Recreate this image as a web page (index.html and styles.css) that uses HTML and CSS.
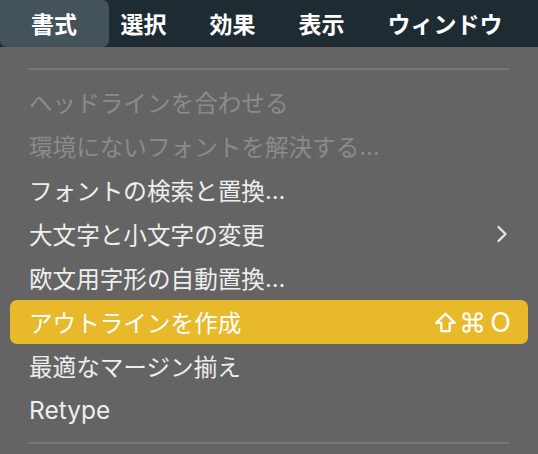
FILE: index.html
```html
<!DOCTYPE html>
<html lang="ja">
<head>
<meta charset="utf-8">
<title>書式メニュー</title>
<link rel="stylesheet" href="styles.css">
</head>
<body>
<div class="screen">
  <nav class="menubar">
    <span class="bar-item active">書式</span>
    <span class="bar-item">選択</span>
    <span class="bar-item">効果</span>
    <span class="bar-item">表示</span>
    <span class="bar-item">ウィンドウ</span>
  </nav>
  <div class="menu">
    <div class="sep"></div>
    <ul class="items">
      <li class="item disabled">ヘッドラインを合わせる</li>
      <li class="item disabled">環境にないフォントを解決する<span class="dots">…</span></li>
      <li class="item">フォントの検索と置換<span class="dots">…</span></li>
      <li class="item">大文字と小文字の変更
        <svg class="chev" viewBox="0 0 12 18" width="12" height="18"><path d="M2.5 2 L9.5 9 L2.5 16" fill="none" stroke="currentColor" stroke-width="2.4" stroke-linecap="round" stroke-linejoin="round"/></svg>
      </li>
      <li class="item">欧文用字形の自動置換<span class="dots">…</span></li>
      <li class="item selected">アウトラインを作成
        <span class="shortcut">
          <svg class="key" viewBox="1.5 1.5 21 21" width="21" height="21"><path d="M12 3.2 L2.8 12.4 H7.8 V20.6 H16.2 V12.4 H21.2 Z" fill="none" stroke="currentColor" stroke-width="2.3" stroke-linejoin="round"/></svg>
          <svg class="key" viewBox="1.8 1.8 20.4 20.4" width="21" height="21"><path d="M18 3a3 3 0 0 0-3 3v12a3 3 0 0 0 3 3 3 3 0 0 0 3-3 3 3 0 0 0-3-3H6a3 3 0 0 0-3 3 3 3 0 0 0 3 3 3 3 0 0 0 3-3V6a3 3 0 0 0-3-3 3 3 0 0 0-3 3 3 3 0 0 0 3 3h12a3 3 0 0 0 3-3 3 3 0 0 0-3-3z" fill="none" stroke="currentColor" stroke-width="2"/></svg>
          <span class="letter">O</span>
        </span>
      </li>
      <li class="item">最適なマージン揃え</li>
      <li class="item"><span class="latin">Retype</span></li>
    </ul>
    <div class="sep"></div>
  </div>
</div>
</body>
</html>
```
FILE: styles.css
```css
html, body {
  margin: 0;
  padding: 0;
  background: #646464;
}
.screen {
  width: 538px;
  height: 454px;
  overflow: hidden;
  background: #646464;
  font-family: "Inter", "Noto Sans CJK JP", sans-serif;
}
.menubar {
  display: flex;
  align-items: stretch;
  height: 47px;
  background: #1f2b32;
  color: #ffffff;
  font-family: "Noto Sans CJK JP", sans-serif;
  font-size: 23px;
  font-weight: 600;
}
.bar-item {
  display: flex;
  align-items: center;
  padding: 0 21.5px;
  line-height: 1;
  white-space: nowrap;
}
.bar-item.active {
  background: #44535b;
  border-radius: 0 7px 7px 7px;
  padding: 0 32px 0 31px;
  margin-right: -10px;
}
.menu {
  padding: 21px 10px 0 10px;
}
.sep {
  height: 2px;
  background: #777777;
  margin: 0 19px 0 18px;
}
.items {
  list-style: none;
  margin: 10px 0;
  padding: 0;
}
.item {
  display: flex;
  align-items: center;
  height: 44px;
  padding: 0 17px 0 19px;
  color: #eeeeee;
  font-size: 23.6px;
  font-weight: 400;
  white-space: nowrap;
  border-radius: 7px;
}
.item.disabled {
  color: #8b8b8b;
}
.item.selected {
  background: #e8b92b;
  color: #ffffff;
}
.dots {
  font-family: "Inter", sans-serif;
}
.latin {
  font-size: 24.5px;
}
.chev {
  margin-left: auto;
  margin-right: 3px;
  color: #e2e2e2;
}
.shortcut {
  margin-left: auto;
  display: flex;
  align-items: center;
  gap: 6px;
}
.key {
  display: block;
}
.letter {
  font-family: "Inter", sans-serif;
  font-size: 27px;
  font-weight: 400;
  line-height: 1;
  margin-left: 1px;
}
```
